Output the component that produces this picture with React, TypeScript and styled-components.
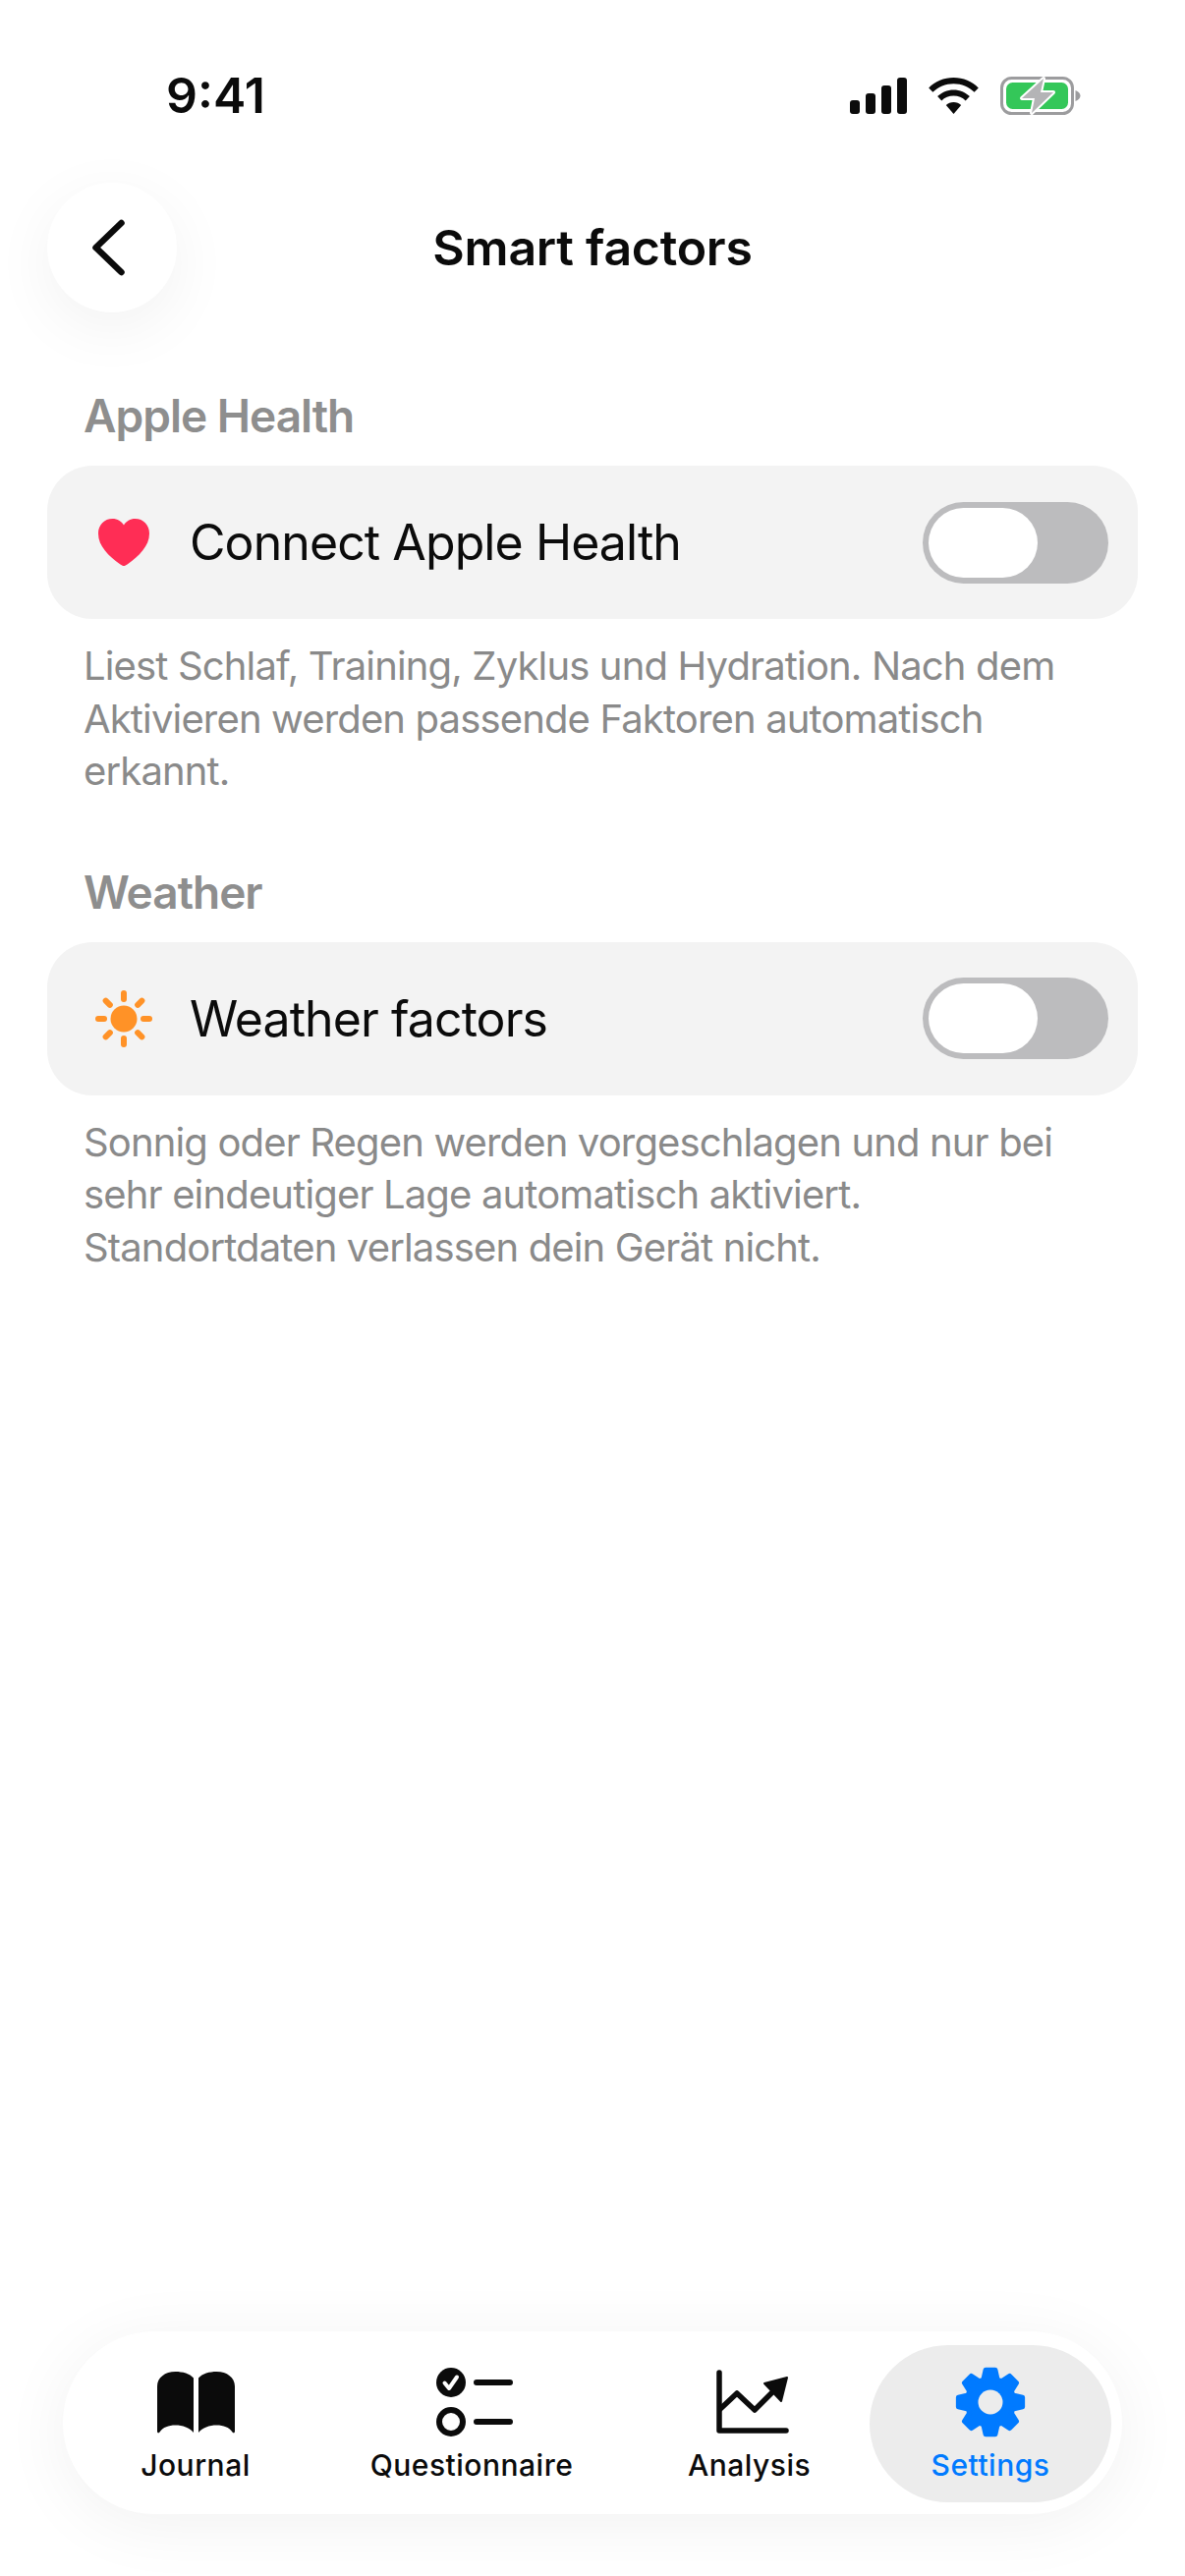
import React from "react";
import styled, { createGlobalStyle } from "styled-components";

const Global = createGlobalStyle`
  html, body { margin: 0; padding: 0; background: #fff; }
  body { font-family: Inter, "Liberation Sans", sans-serif; color: #0b0b0b; }
  * { box-sizing: border-box; }
`;

const Screen = styled.div`
  width: 1206px;
  height: 2622px;
  padding: 0 48px 63px;
  display: flex;
  flex-direction: column;
  background: #fff;
  overflow: hidden;
`;

const StatusBar = styled.div`
  height: 186px;
  padding: 72px 58px 64px 121px;
  display: flex;
  align-items: center;
  justify-content: space-between;
`;

const Time = styled.span`
  font-size: 50px;
  font-weight: 600;
  line-height: 50px;
`;

const StatusIcons = styled.div`
  display: flex;
  align-items: center;
  gap: 22px;
`;

const Header = styled.header`
  display: grid;
  grid-template-columns: 132px 1fr 132px;
  align-items: center;
  height: 132px;
`;

const BackButton = styled.button`
  width: 132px;
  height: 132px;
  padding: 0;
  border: 0;
  border-radius: 50%;
  background: #fff;
  box-shadow: 0 16px 64px rgba(0, 0, 0, 0.055);
  display: flex;
  align-items: center;
  justify-content: center;
`;

const Title = styled.h1`
  margin: 0;
  text-align: center;
  font-size: 50px;
  line-height: 60px;
  font-weight: 600;
  letter-spacing: -0.25px;
`;

const Section = styled.section<{ $top: number }>`
  margin-top: ${(p) => p.$top}px;
`;

const SectionLabel = styled.h2`
  margin: 0 37px 23px;
  font-size: 46px;
  line-height: 56px;
  font-weight: 600;
  letter-spacing: -1px;
  color: #8e8e8e;
`;

const Card = styled.div`
  height: 156px;
  padding: 0 30px 0 49px;
  display: flex;
  align-items: center;
  gap: 38px;
  background: #f3f3f3;
  border-radius: 46px;
`;

const RowIcon = styled.span`
  width: 58px;
  height: 58px;
  display: flex;
  align-items: center;
  justify-content: center;
  flex: none;
`;

const RowLabel = styled.span`
  flex: 1;
  font-size: 50px;
  line-height: 60px;
  font-weight: 400;
  letter-spacing: -0.92px;
`;

const Toggle = styled.span`
  width: 189px;
  height: 83px;
  padding: 6px;
  border-radius: 42px;
  background: #bcbcbe;
  display: block;
  flex: none;
`;

const Thumb = styled.span`
  display: block;
  width: 111px;
  height: 71px;
  border-radius: 36px;
  background: #fff;
`;

const Description = styled.p`
  margin: 21px 37px 0;
  font-size: 40px;
  line-height: 53.5px;
  font-weight: 400;
  letter-spacing: -0.85px;
  color: #8a8a8a;
`;

const Nav = styled.nav`
  margin: auto 16px 0;
  height: 186px;
  padding: 14px 11px 12px 14px;
  display: grid;
  grid-template-columns: 242px 320px 245px 246px;
  background: #fff;
  border-radius: 93px;
  box-shadow: 0 10px 70px rgba(0, 0, 0, 0.06);
`;

const NavItem = styled.div<{ $active?: boolean }>`
  padding-top: 22px;
  display: flex;
  flex-direction: column;
  align-items: center;
  border-radius: 80px;
  background: ${(p) => (p.$active ? "#ececec" : "transparent")};
  color: ${(p) => (p.$active ? "#007aff" : "#0b0b0b")};
`;

const NavIcon = styled.span`
  height: 72px;
  display: flex;
  align-items: center;
  justify-content: center;
`;

const NavLabel = styled.span`
  margin-top: 8px;
  font-size: 30px;
  line-height: 40px;
  font-weight: 500;
  letter-spacing: 0.5px;
`;

const Signal = () => (
  <svg width="58" height="37" viewBox="0 0 58 37" fill="#0b0b0b">
    <rect x="0" y="23" width="10" height="14" rx="3" />
    <rect x="16" y="16" width="10" height="21" rx="3" />
    <rect x="32" y="8" width="10" height="29" rx="3" />
    <rect x="48" y="0" width="10" height="37" rx="3" />
  </svg>
);

const Wifi = () => (
  <svg width="51" height="37" viewBox="0 0 51 37" fill="#0b0b0b">
    <path d="M25.5 0C35.4 0 44.3 4 50.8 10.4L46.6 14.8C41.2 9.5 33.7 6.2 25.5 6.2S9.8 9.500 4.400 14.800L.2 10.400C6.700 4 15.600 0 25.500 0Z" />
    <path d="M25.500 12.400C31.900 12.400 37.700 15 41.900 19.100L37.700 23.500C34.600 20.500 30.300 18.600 25.500 18.600S16.400 20.500 13.300 23.500L9.100 19.100C13.300 15 19.100 12.400 25.500 12.400Z" />
    <path d="M25.500 25C28.500 25 31.200 26.200 33.200 28.100L25.500 37L17.800 28.100C19.800 26.200 22.500 25 25.500 25Z" />
  </svg>
);

const Battery = () => (
  <svg width="82" height="41" viewBox="0 0 82 41">
    <rect x="1.500" y="2.500" width="72" height="36" rx="10" fill="none" stroke="#9c9c9e" strokeWidth="3" />
    <rect x="6" y="7" width="63" height="27" rx="6.500" fill="#34c759" />
    <path d="M76.500 15C79.500 16 81.500 18 81.500 20.500S79.500 25 76.500 26Z" fill="#9c9c9e" />
    <path
      d="M44 3L22 23H35L32 38L54 17H41Z"
      fill="#b4b4b6"
      stroke="#fff"
      strokeWidth="4"
      strokeLinejoin="round"
      paintOrder="stroke"
    />
  </svg>
);

const Chevron = () => (
  <svg width="40" height="62" viewBox="-4 0 40 62" fill="none" overflow="visible">
    <path
      d="M25.500 6L-.5 31L25.500 56"
      stroke="#0b0b0b"
      strokeWidth="6.500"
      strokeLinecap="round"
      strokeLinejoin="round"
    />
  </svg>
);

const Heart = () => (
  <svg width="52" height="48" viewBox="0 0 52 48">
    <path
      d="M26 48C24.800 48 23.700 47.400 22.500 46.500C10.500 38 0 27.800 0 15C0 6.300 6.200 0 14.500 0C19.500 0 23.500 2.500 26 6.500C28.500 2.500 32.500 0 37.500 0C45.800 0 52 6.300 52 15C52 27.800 41.500 38 29.500 46.500C28.300 47.400 27.200 48 26 48Z"
      fill="#ff2d55"
    />
  </svg>
);

const Sun = () => {
  const rays = [0, 45, 90, 135, 180, 225, 270, 315];
  return (
    <svg width="58" height="58" viewBox="-29 -29 58 58">
      <circle r="13.500" fill="#ff9227" />
      {rays.map((a) => (
        <line
          key={a}
          x1="0"
          y1="-20"
          x2="0"
          y2="-26"
          stroke="#ff9227"
          strokeWidth="6"
          strokeLinecap="round"
          transform={`rotate(${a})`}
        />
      ))}
    </svg>
  );
};

const Book = () => (
  <svg width="79" height="63" viewBox="0 0 79 63" fill="#0b0b0b">
    <path d="M37 6.500V62C33 57 26 54.500 18.500 54.500C11.500 54.500 6 56.500 2.500 61.500C1.500 63 0 62.500 0 60.500V15C0 6 8 0 18.500 0C26 0 33 2 37 6.500Z" />
    <path d="M42 6.500V62C46 57 53 54.500 60.500 54.500C67.500 54.500 73 56.500 76.500 61.500C77.500 63 79 62.500 79 60.500V15C79 6 71 0 60.500 0C53 0 46 2 42 6.500Z" />
  </svg>
);

const Checklist = () => (
  <svg width="83" height="70" viewBox="-5 0 83 70" fill="none">
    <circle cx="15" cy="15" r="15" fill="#0b0b0b" />
    <path d="M8.500 15.500L13 21L21 9.500" stroke="#fff" strokeWidth="4" strokeLinecap="round" strokeLinejoin="round" />
    <circle cx="15" cy="55" r="12" stroke="#0b0b0b" strokeWidth="6" />
    <path d="M41 15H75M41 55H75" stroke="#0b0b0b" strokeWidth="6" strokeLinecap="round" />
  </svg>
);

const Chart = () => (
  <svg width="80" height="66" viewBox="-6 0 80 66" fill="none">
    <path d="M3 3V62H71" stroke="#0b0b0b" strokeWidth="5.500" strokeLinecap="round" strokeLinejoin="round" />
    <path d="M4 40L21 24L39 41L60 20" stroke="#0b0b0b" strokeWidth="5.500" strokeLinecap="round" strokeLinejoin="round" />
    <path d="M49 14L72 8L66 32Z" fill="#0b0b0b" stroke="#0b0b0b" strokeWidth="2" strokeLinejoin="round" />
  </svg>
);

const gearPoints = () => {
  const pts: string[] = [];
  for (let i = 0; i < 8; i++) {
    const c = (i * Math.PI) / 4 - Math.PI / 2;
    const at = (r: number, d: number) =>
      `${(r * Math.cos(c + d)).toFixed(2)},${(r * Math.sin(c + d)).toFixed(2)}`;
    pts.push(at(24, -0.3), at(33, -0.15), at(33, 0.15), at(24, 0.3));
  }
  return pts.join(" ");
};

const Gear = () => (
  <svg width="72" height="72" viewBox="-36 -36 72 72">
    <polygon points={gearPoints()} fill="#007aff" stroke="#007aff" strokeWidth="5" strokeLinejoin="round" />
    <circle r="12.500" fill="#ececec" />
  </svg>
);

const Row = ({ icon, label }: { icon: React.ReactNode; label: string }) => (
  <Card>
    <RowIcon>{icon}</RowIcon>
    <RowLabel>{label}</RowLabel>
    <Toggle>
      <Thumb />
    </Toggle>
  </Card>
);

const tabs: { label: string; icon: React.ReactNode; active?: boolean }[] = [
  { label: "Journal", icon: <Book /> },
  { label: "Questionnaire", icon: <Checklist /> },
  { label: "Analysis", icon: <Chart /> },
  { label: "Settings", icon: <Gear />, active: true },
];

export default function App() {
  return (
    <Screen>
      <Global />
      <StatusBar>
        <Time>9:41</Time>
        <StatusIcons>
          <Signal />
          <Wifi />
          <Battery />
        </StatusIcons>
      </StatusBar>
      <Header>
        <BackButton aria-label="Back">
          <Chevron />
        </BackButton>
        <Title>Smart factors</Title>
      </Header>
      <Section $top={77}>
        <SectionLabel>Apple Health</SectionLabel>
        <Row icon={<Heart />} label="Connect Apple Health" />
        <Description>
          Liest Schlaf, Training, Zyklus und Hydration. Nach dem Aktivieren werden passende Faktoren
          automatisch erkannt.
        </Description>
      </Section>
      <Section $top={68}>
        <SectionLabel>Weather</SectionLabel>
        <Row icon={<Sun />} label="Weather factors" />
        <Description>
          Sonnig oder Regen werden vorgeschlagen und nur bei sehr eindeutiger Lage automatisch aktiviert.
          Standortdaten verlassen dein Gerät nicht.
        </Description>
      </Section>
      <Nav>
        {tabs.map((t) => (
          <NavItem key={t.label} $active={t.active}>
            <NavIcon>{t.icon}</NavIcon>
            <NavLabel>{t.label}</NavLabel>
          </NavItem>
        ))}
      </Nav>
    </Screen>
  );
}
